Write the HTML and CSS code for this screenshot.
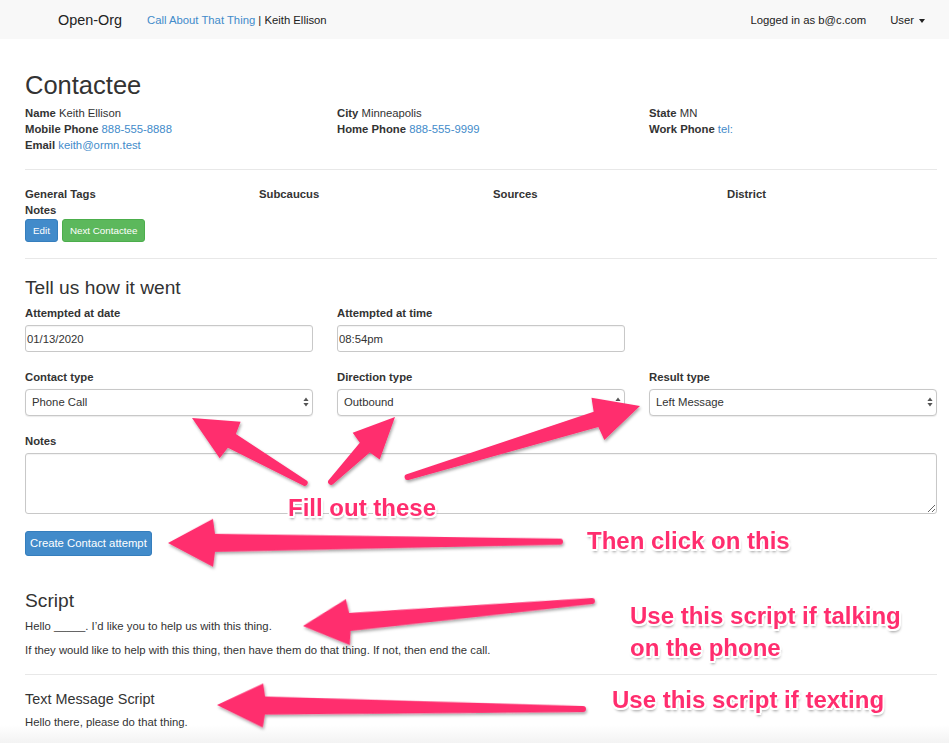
FILE: index.html
```html
<!DOCTYPE html>
<html lang="en">
<head>
<meta charset="utf-8">
<title>Open-Org</title>
<link rel="stylesheet" href="styles.css">
</head>
<body>
<div class="page">
  <nav class="navbar">
    <span class="brand">Open-Org</span>
    <span class="crumb"><a href="#">Call About That Thing</a> | Keith Ellison</span>
    <div class="nav-right">
      <span>Logged in as b@c.com</span>
      <span class="user">User <span class="caret"></span></span>
    </div>
  </nav>

  <main class="main">
    <h1 class="title">Contactee</h1>
    <div class="info">
      <div>
        <div><b>Name</b> Keith Ellison</div>
        <div><b>Mobile Phone</b> <a href="#">888-555-8888</a></div>
        <div><b>Email</b> <a href="#">keith@ormn.test</a></div>
      </div>
      <div>
        <div><b>City</b> Minneapolis</div>
        <div><b>Home Phone</b> <a href="#">888-555-9999</a></div>
      </div>
      <div>
        <div><b>State</b> MN</div>
        <div><b>Work Phone</b> <a href="#">tel:</a></div>
      </div>
    </div>
    <hr class="rule">
    <div class="tags">
      <b>General Tags</b>
      <b>Subcaucus</b>
      <b>Sources</b>
      <b>District</b>
    </div>
    <div><b>Notes</b></div>
    <div class="btns">
      <button class="btn btn-blue btn-sm">Edit</button>
      <button class="btn btn-green btn-sm">Next Contactee</button>
    </div>
    <hr class="rule">

    <h3 class="h3 h3-form">Tell us how it went</h3>
    <div class="form-row">
      <div class="group">
        <label class="label">Attempted at date</label>
        <input class="control control-plain" type="text" value="01/13/2020">
      </div>
      <div class="group">
        <label class="label">Attempted at time</label>
        <input class="control control-plain" type="text" value="08:54pm">
      </div>
      <div></div>
    </div>
    <div class="form-row">
      <div class="group">
        <label class="label">Contact type</label>
        <div class="select-wrap">
          <select class="control select"><option>Phone Call</option></select>
          <svg class="updown" width="6" height="10" viewBox="0 0 6 10"><path d="M3 0.5 L5.6 4 H0.4 Z M3 9.5 L5.6 6 H0.4 Z" fill="#555"/></svg>
        </div>
      </div>
      <div class="group">
        <label class="label">Direction type</label>
        <div class="select-wrap">
          <select class="control select"><option>Outbound</option></select>
          <svg class="updown" width="6" height="10" viewBox="0 0 6 10"><path d="M3 0.5 L5.6 4 H0.4 Z M3 9.5 L5.6 6 H0.4 Z" fill="#555"/></svg>
        </div>
      </div>
      <div class="group">
        <label class="label">Result type</label>
        <div class="select-wrap">
          <select class="control select"><option>Left Message</option></select>
          <svg class="updown" width="6" height="10" viewBox="0 0 6 10"><path d="M3 0.5 L5.6 4 H0.4 Z M3 9.5 L5.6 6 H0.4 Z" fill="#555"/></svg>
        </div>
      </div>
    </div>
    <div class="group group-notes">
      <label class="label">Notes</label>
      <textarea class="control textarea"></textarea>
    </div>
    <button class="btn btn-blue btn-create">Create Contact attempt</button>

    <h3 class="h3 h3-script">Script</h3>
    <p class="para">Hello _____. I’d like you to help us with this thing.</p>
    <p class="para">If they would like to help with this thing, then have them do that thing. If not, then end the call.</p>
    <hr class="rule">
    <h4 class="h4">Text Message Script</h4>
    <p class="para">Hello there, please do that thing.</p>
  </main>

  <div class="annotations">
    <svg class="arrows" width="949" height="743" viewBox="0 0 949 743">
      <defs>
        <filter id="sh" x="-20%" y="-50%" width="140%" height="200%">
          <feDropShadow dx="1" dy="2" stdDeviation="1.8" flood-color="#000" flood-opacity="0.35"/>
        </filter>
      </defs>
      <g fill="#ff2d6e" filter="url(#sh)">
        <g transform="translate(192 418) rotate(29.9)">
          <path d="M0 0 L44 -21 L46 -8 L130 -3 A3 3 0 0 1 130 3 L46 8 L44 21 Z"/>
        </g>
        <g transform="translate(395 417) rotate(134.6)">
          <path d="M0 0 L41 -19 L43 -7 L91 -3 A3 3 0 0 1 91 3 L43 7 L41 19 Z"/>
        </g>
        <g transform="translate(640 406) rotate(163)">
          <path d="M0 0 L44 -22 L46 -8 L243 -3 A3 3 0 0 1 243 3 L46 8 L44 22 Z"/>
        </g>
        <g transform="translate(168 543) rotate(-0.2)">
          <path d="M0 0 L45 -24 L47 -9 L392 -3 A3 3 0 0 1 392 3 L47 9 L45 24 Z"/>
        </g>
        <g transform="translate(303 626) rotate(-4.94)">
          <path d="M0 0 L45 -23 L47 -9 L290 -3 A3 3 0 0 1 290 3 L47 9 L45 23 Z"/>
        </g>
        <g transform="translate(217 705) rotate(0.63)">
          <path d="M0 0 L46 -22 L48 -9 L366 -3 A3 3 0 0 1 366 3 L48 9 L46 22 Z"/>
        </g>
      </g>
    </svg>
    <div class="note note-fill">Fill out these</div>
    <div class="note note-click">Then click on this</div>
    <div class="note note-script">Use this script if talking<br>on the phone</div>
    <div class="note note-text">Use this script if texting</div>
  </div>
</div>
</body>
</html>
```
FILE: styles.css
```css
* { box-sizing: border-box; }

html, body {
  margin: 0;
  padding: 0;
}

body {
  font-family: "Liberation Sans", Arial, Helvetica, sans-serif;
  font-size: 11.3px;
  line-height: 16px;
  color: #333;
  background: #fff;
}

a { color: #428bca; text-decoration: none; }
b { font-weight: bold; }

.page {
  position: relative;
  width: 949px;
  height: 743px;
  overflow: hidden;
  background: linear-gradient(to bottom, #fff 0, #fff 725px, #f3f3f3 743px);
}

/* navbar */
.navbar {
  height: 39px;
  background: #f8f8f8;
  display: flex;
  align-items: center;
  padding: 0 24px 0 58px;
  color: #222;
}
.brand {
  font-size: 14.4px;
  color: #222;
  margin-right: 25px;
}
.crumb { color: #222; }
.nav-right {
  margin-left: auto;
  display: flex;
  align-items: center;
  gap: 24px;
}
.user { display: flex; align-items: center; }
.caret {
  display: inline-block;
  width: 0;
  height: 0;
  margin-left: 5px;
  margin-top: 2px;
  border-top: 4px solid #222;
  border-left: 3.5px solid transparent;
  border-right: 3.5px solid transparent;
}

/* main */
.main {
  padding: 0 12px 0 25px;
}
.title {
  font-size: 25.5px;
  font-weight: normal;
  line-height: 28px;
  margin: 32px 0 6px;
  color: #333;
}
.info {
  display: grid;
  grid-template-columns: repeat(3, 1fr);
  column-gap: 24px;
}
.rule {
  border: 0;
  border-top: 1px solid #e8e8e8;
  margin: 16px 0;
  height: 0;
}
.tags {
  display: grid;
  grid-template-columns: repeat(4, 1fr);
  column-gap: 24px;
  margin-top: 1px;
}
.btns {
  display: flex;
  gap: 4px;
  margin-top: 1px;
}
.btn {
  font-family: inherit;
  color: #fff;
  border: 1px solid transparent;
  border-radius: 3px;
  cursor: pointer;
  display: inline-flex;
  align-items: center;
  justify-content: center;
  white-space: nowrap;
}
.btn-sm {
  height: 23px;
  font-size: 9.8px;
  padding: 0 7px;
}
.btn-blue { background: #428bca; border-color: #357ebd; }
.btn-green { background: #5cb85c; border-color: #4cae4c; }

.h3 {
  font-size: 19.2px;
  font-weight: normal;
  line-height: 21px;
  color: #333;
}
.h3-form { margin: 18px 0 7px; }
.h3-script { margin: 34px 0 7px; }
.h4 {
  font-size: 14.4px;
  font-weight: normal;
  line-height: 16px;
  margin: 16px 0 7px;
  color: #333;
}
.para { margin: 0 0 8px; }

.form-row {
  display: grid;
  grid-template-columns: repeat(3, 1fr);
  column-gap: 24px;
  margin-bottom: 17px;
}
.group { display: flex; flex-direction: column; }
.label {
  font-weight: bold;
  margin-bottom: 4px;
}
.control {
  font-family: inherit;
  font-size: 11.3px;
  color: #333;
  width: 100%;
  border: 1px solid #c8c8c8;
  border-radius: 3px;
  background: #fff;
  box-shadow: inset 0 1px 1px rgba(0, 0, 0, 0.05);
  outline: none;
}
.control-plain {
  height: 27px;
  padding: 0 1px;
}
.select-wrap { position: relative; }
.select {
  -webkit-appearance: none;
  appearance: none;
  height: 26.5px;
  padding: 0 6px;
  border-radius: 4px;
  box-shadow: 0 0.5px 1px rgba(0, 0, 0, 0.08);
}
.updown {
  position: absolute;
  right: 4px;
  top: 8px;
}
.group-notes { margin-bottom: 17px; }
.textarea {
  height: 61px;
  resize: vertical;
  display: block;
}
.btn-create {
  height: 25px;
  font-size: 11.3px;
  padding: 0 4px;
  min-width: 125px;
}

/* annotations */
.annotations {
  position: absolute;
  left: 0;
  top: 0;
  width: 949px;
  height: 743px;
  pointer-events: none;
}
.arrows {
  position: absolute;
  left: 0;
  top: 0;
}
.note {
  position: absolute;
  font-family: "Liberation Sans", Arial, sans-serif;
  font-weight: bold;
  font-size: 24px;
  line-height: 32px;
  color: #ff2d6e;
  white-space: nowrap;
  text-shadow:
    -1.5px -1.5px 0 #fff, 1.5px -1.5px 0 #fff,
    -1.5px 1.5px 0 #fff, 1.5px 1.5px 0 #fff,
    0 -2px 0 #fff, 0 2px 0 #fff, -2px 0 0 #fff, 2px 0 0 #fff,
    1px 3px 3px rgba(0, 0, 0, 0.45);
}
.note-fill { left: 288px; top: 492px; }
.note-click { left: 587px; top: 525px; }
.note-script { left: 630px; top: 600px; }
.note-text { left: 612px; top: 684px; }
```
